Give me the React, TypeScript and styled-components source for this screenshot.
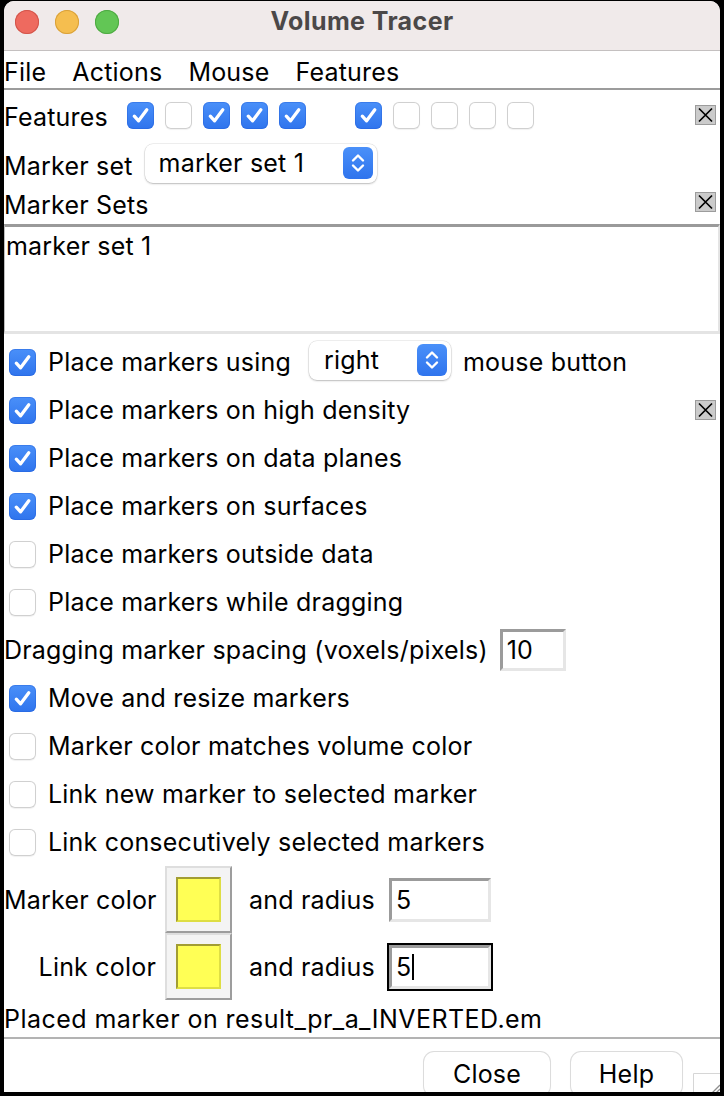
import React from 'react';
import styled, { createGlobalStyle, css } from 'styled-components';

const FONT = `Inter, "Liberation Sans", Arial, sans-serif`;

const GlobalStyle = createGlobalStyle`
  html, body { margin: 0; padding: 0; background: #000; }
  body { font-family: ${FONT}; }
  * { box-sizing: border-box; }
`;

const Frame = styled.div`
  width: 724px;
  height: 1096px;
  background: #000;
  padding: 1px 4px 4px 4px;
  overflow: hidden;
`;

const Window = styled.div`
  height: 100%;
  background: #fff;
  border-radius: 10px 10px 0 0;
  overflow: hidden;
  display: flex;
  flex-direction: column;
  font-size: 25px;
  letter-spacing: 0.2px;
  line-height: 28px;
  color: #000;
`;

const TitleBar = styled.div`
  height: 50px;
  flex: none;
  background: #f0eaea;
  border-bottom: 1px solid #c4c0c0;
  display: grid;
  grid-template-columns: 1fr auto 1fr;
  align-items: start;
`;

const Lights = styled.div`
  display: flex;
  gap: 16px;
  padding: 9px 0 0 11px;
`;

const Light = styled.span<{ $c: string; $b: string }>`
  width: 24px;
  height: 24px;
  border-radius: 50%;
  background: ${p => p.$c};
  box-shadow: inset 0 0 0 1px ${p => p.$b};
`;

const Title = styled.div`
  font-weight: 700;
  font-size: 25px;
  letter-spacing: 0.4px;
  line-height: 26px;
  color: #4b4848;
  padding-top: 7px;
`;

const MenuBar = styled.div`
  height: 39px;
  flex: none;
  border-bottom: 2px solid #9c9c9c;
  display: flex;
  align-items: center;
  gap: 26px;
  padding-top: 5px;
`;

const MenuItem = styled.span``;

const Row = styled.div<{ $h: number }>`
  height: ${p => p.$h}px;
  flex: none;
  display: flex;
  align-items: center;
  padding-right: 4px;
`;

const Label = styled.span<{ $mt?: number; $mr?: number }>`
  white-space: nowrap;
  margin-top: ${p => p.$mt ?? 0}px;
  margin-right: ${p => p.$mr ?? 0}px;
`;

const Spacer = styled.span`
  flex: 1;
`;

const BoxGroup = styled.div`
  display: flex;
  gap: 11px;
  margin-left: 19px;
`;

const Box = styled.span<{ $checked: boolean }>`
  width: 27px;
  height: 27px;
  flex: none;
  border-radius: 6px;
  display: inline-flex;
  align-items: center;
  justify-content: center;
  ${p =>
    p.$checked
      ? css`
          background: linear-gradient(#4a90f9, #2f74ed);
          box-shadow: inset 0 0 0 1px rgba(35, 95, 215, 0.4);
        `
      : css`
          background: #fff;
          box-shadow: inset 0 0 0 1px #d0d0d0, 0 0.5px 1px rgba(0, 0, 0, 0.06);
        `}
`;

const BlankSlot = styled.span`
  width: 27px;
  height: 27px;
`;

const Select = styled.div<{ $w: number; $pl: number }>`
  width: ${p => p.$w}px;
  height: 39px;
  flex: none;
  border-radius: 8px;
  background: #fff;
  box-shadow: 0 0 0 0.5px rgba(0, 0, 0, 0.12), 0 1px 2px rgba(0, 0, 0, 0.22);
  display: flex;
  align-items: center;
  padding: 0 4px 0 ${p => p.$pl}px;
`;

const SelectText = styled.span`
  flex: 1;
`;

const Stepper = styled.span`
  width: 30px;
  height: 32px;
  border-radius: 6px;
  background: linear-gradient(#4a90f9, #2f74ed);
  display: inline-flex;
  align-items: center;
  justify-content: center;
`;

const List = styled.div`
  height: 110px;
  flex: none;
  border-top: 3px solid #9a9a9a;
  border-left: 1px solid #bdbdbd;
  border-right: 2px solid #e4e4e4;
  border-bottom: 3px solid #e4e4e4;
  padding: 5px 0 0 1px;
  margin-bottom: 4px;
`;

const CheckRows = styled.div`
  display: flex;
  flex-direction: column;
  flex: none;
`;

const CheckRow = styled.div`
  height: 48px;
  display: flex;
  align-items: center;
  padding: 0 4px 0 5px;
  gap: 12px;
`;

const PlainRow = styled.div`
  height: 48px;
  display: flex;
  align-items: center;
`;

const Entry = styled.div<{ $w: number; $h: number; $focus?: boolean }>`
  width: ${p => p.$w}px;
  height: ${p => p.$h}px;
  flex: none;
  border-style: solid;
  border-width: 3px;
  border-color: #9b9b9b #e6e6e6 #e6e6e6 #9b9b9b;
  background: #fff;
  display: flex;
  align-items: center;
  padding-left: 4px;
  ${p =>
    p.$focus &&
    css`
      outline: 2px solid #000;
    `}
`;

const Caret = styled.span`
  display: inline-block;
  width: 1.5px;
  height: 26px;
  background: #000;
  margin-left: 1px;
  vertical-align: middle;
`;

const ColorRow = styled.div`
  height: 67px;
  flex: none;
  display: flex;
  align-items: center;
`;

const ColorLabel = styled.span`
  width: 152px;
  text-align: right;
  white-space: nowrap;
  flex: none;
`;

const ColorWell = styled.div`
  width: 67px;
  height: 67px;
  flex: none;
  margin-left: 9px;
  background: #f4f4f4;
  border-style: solid;
  border-width: 2px;
  border-color: #dedede #9d9d9d #9d9d9d #dedede;
  display: flex;
  align-items: center;
  justify-content: center;
`;

const Swatch = styled.div<{ $c: string }>`
  width: 45px;
  height: 45px;
  background: ${p => p.$c};
  border-style: solid;
  border-width: 2px;
  border-color: #a29d33 #dede44 #dede44 #a29d33;
`;

const RadiusLabel = styled.span`
  margin: 0 14px 0 17px;
  white-space: nowrap;
`;

const Status = styled.div`
  height: 37px;
  flex: none;
  display: flex;
  align-items: center;
  white-space: nowrap;
  letter-spacing: 0.45px;
`;

const ButtonBar = styled.div`
  flex: 1;
  border-top: 2px solid #b3b3b3;
  display: flex;
  justify-content: flex-end;
  align-items: flex-start;
  padding-top: 13px;
`;

const Button = styled.div<{ $w: number }>`
  width: ${p => p.$w}px;
  height: 44px;
  flex: none;
  border-radius: 10px;
  background: #fff;
  box-shadow: 0 0 0 1px #dcdcdc, 0 1px 2px rgba(0, 0, 0, 0.12);
  display: flex;
  align-items: center;
  justify-content: center;
  margin-left: 21px;
`;

const Grip = styled.div`
  align-self: flex-end;
  margin-left: 11px;
  width: 27px;
  height: 23px;
  flex: none;
  display: flex;
`;

const Check = () => (
  <svg width="27" height="27" viewBox="0 0 27 27">
    <path d="M7.3 14.2 L11.6 18.8 L19.8 7.8" fill="none" stroke="#fff" strokeWidth="3.3" strokeLinecap="round" strokeLinejoin="round" />
  </svg>
);

const CheckBox = ({ on }: { on: boolean }) => <Box $checked={on}>{on && <Check />}</Box>;

const StepperIcon = () => (
  <Stepper>
    <svg width="30" height="32" viewBox="0 0 30 32">
      <path d="M10 13.5 L15 8.5 L20 13.5 M10 18.5 L15 23.5 L20 18.5" fill="none" stroke="#fff" strokeWidth="2.4" strokeLinecap="round" strokeLinejoin="round" />
    </svg>
  </Stepper>
);

const CloseBox = ({ mb = 0 }: { mb?: number }) => (
  <svg width="21" height="20" viewBox="0 0 21 20" style={{ marginBottom: mb }}>
    <rect x="0.5" y="0.5" width="20" height="19" fill="#cbcbcb" stroke="#9c9c9c" />
    <path d="M4 3.5 L17 16.5 M17 3.5 L4 16.5" stroke="#000" strokeWidth="1.7" />
  </svg>
);

const GripIcon = () => (
  <svg width="27" height="23" viewBox="0 0 27 23">
    <path d="M0.5 23 V0.5 H27" fill="none" stroke="#d6d6d6" strokeWidth="1" />
    <path d="M27 12 L15 24 M27 16 L19 24 M27 20 L23 24" stroke="#8e8e8e" strokeWidth="1.3" />
  </svg>
);

const featureChecks: (boolean | null)[] = [true, false, true, true, true, null, true, false, false, false, false];

const options: { label: string; on: boolean }[] = [
  { label: 'Place markers on data planes', on: true },
  { label: 'Place markers on surfaces', on: true },
  { label: 'Place markers outside data', on: false },
  { label: 'Place markers while dragging', on: false },
];

const options2: { label: string; on: boolean }[] = [
  { label: 'Move and resize markers', on: true },
  { label: 'Marker color matches volume color', on: false },
  { label: 'Link new marker to selected marker', on: false },
  { label: 'Link consecutively selected markers', on: false },
];

export default function App() {
  return (
    <>
      <GlobalStyle />
      <Frame>
        <Window>
          <TitleBar>
            <Lights>
              <Light $c="#ee6a5f" $b="#d2554b" />
              <Light $c="#f5be4f" $b="#d9a13a" />
              <Light $c="#62c655" $b="#4ea943" />
            </Lights>
            <Title>Volume Tracer</Title>
            <span />
          </TitleBar>

          <MenuBar>
            <MenuItem>File</MenuItem>
            <MenuItem>Actions</MenuItem>
            <MenuItem>Mouse</MenuItem>
            <MenuItem>Features</MenuItem>
          </MenuBar>

          <Row $h={50}>
            <Label $mt={3}>Features</Label>
            <BoxGroup>
              {featureChecks.map((c, i) =>
                c === null ? <BlankSlot key={i} /> : <CheckBox key={i} on={c} />
              )}
            </BoxGroup>
            <Spacer />
            <CloseBox />
          </Row>

          <Row $h={46}>
            <Label $mt={5} $mr={12}>Marker set</Label>
            <Select $w={232} $pl={14}>
              <SelectText>marker set 1</SelectText>
              <StepperIcon />
            </Select>
          </Row>

          <Row $h={38}>
            <Label>Marker Sets</Label>
            <Spacer />
            <CloseBox mb={6} />
          </Row>

          <List>marker set 1</List>

          <CheckRows>
            <CheckRow>
              <CheckBox on />
              <Label $mr={6}>Place markers using</Label>
              <Select $w={142} $pl={15} style={{ marginBottom: 4 }}>
                <SelectText>right</SelectText>
                <StepperIcon />
              </Select>
              <Label>mouse button</Label>
            </CheckRow>
            <CheckRow>
              <CheckBox on />
              <Label>Place markers on high density</Label>
              <Spacer />
              <CloseBox />
            </CheckRow>
            {options.map(o => (
              <CheckRow key={o.label}>
                <CheckBox on={o.on} />
                <Label>{o.label}</Label>
              </CheckRow>
            ))}
            <PlainRow>
              <Label $mr={12}>Dragging marker spacing (voxels/pixels)</Label>
              <Entry $w={66} $h={42}>10</Entry>
            </PlainRow>
            {options2.map(o => (
              <CheckRow key={o.label}>
                <CheckBox on={o.on} />
                <Label>{o.label}</Label>
              </CheckRow>
            ))}
          </CheckRows>

          <ColorRow>
            <ColorLabel>Marker color</ColorLabel>
            <ColorWell>
              <Swatch $c="#ffff55" />
            </ColorWell>
            <RadiusLabel>and radius</RadiusLabel>
            <Entry $w={102} $h={44}>5</Entry>
          </ColorRow>

          <ColorRow>
            <ColorLabel>Link color</ColorLabel>
            <ColorWell>
              <Swatch $c="#ffff55" />
            </ColorWell>
            <RadiusLabel>and radius</RadiusLabel>
            <Entry $w={102} $h={44} $focus>
              5<Caret />
            </Entry>
          </ColorRow>

          <Status>Placed marker on result_pr_a_INVERTED.em</Status>

          <ButtonBar>
            <Button $w={126}>Close</Button>
            <Button $w={111}>Help</Button>
            <Grip>
              <GripIcon />
            </Grip>
          </ButtonBar>
        </Window>
      </Frame>
    </>
  );
}
